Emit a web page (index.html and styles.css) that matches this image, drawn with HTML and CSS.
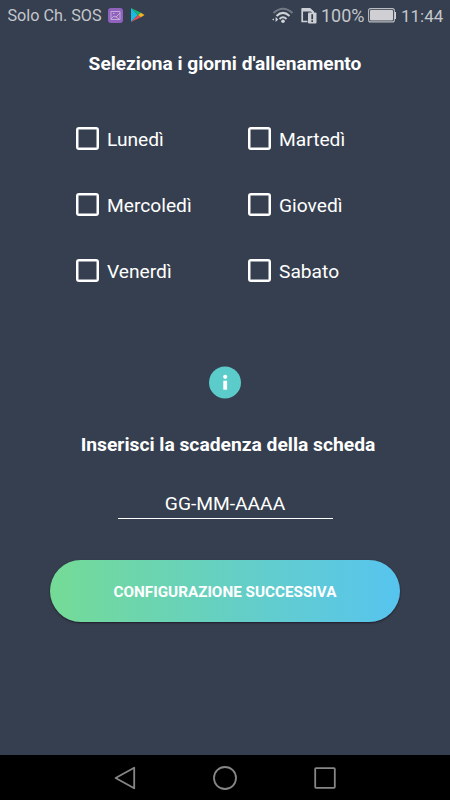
FILE: index.html
```html
<!DOCTYPE html>
<html lang="it">
<head>
<meta charset="utf-8">
<title>Giorni d'allenamento</title>
<link rel="stylesheet" href="styles.css">
</head>
<body>
<header class="status">
  <span class="carrier">Solo Ch. SOS</span>
  <svg class="gallery" width="15" height="15" viewBox="0 0 15 15"><rect width="15" height="15" rx="3" fill="#8f62bd"/><g fill="none" stroke="#c9b3dc" stroke-width=".9"><path d="M3 3.5h9v8H3zM3 11l3-3 2 1 4-4M8 9l3 2"/><path d="M5 5.5h1.5"/></g></svg>
  <svg class="play" width="15" height="16" viewBox="0 0 15 16"><path d="M1 1v14l7-7z" fill="#1cbadf"/><path d="M1 1l10 4.8L8 8z" fill="#10b875"/><path d="M1 15l10-4.8L8 8z" fill="#e84a50"/><path d="M11 5.8L14.5 8 11 10.2 8 8z" fill="#edb51f"/></svg>
  <svg class="wifi" width="22" height="17" viewBox="0 0 22 17"><g fill="none" stroke-width="2"><path d="M1.5 6Q11-2.5 20.5 6" stroke="#727985"/><path d="M4.5 8.9Q11 2.8 17.5 8.9M7.5 12Q11 8.6 14.5 12" stroke="#d0d2d6"/></g><circle cx="11" cy="14.3" r="1.8" fill="#d0d2d6"/><path d="M3.6 10v5l2.6-2.5zM2 11.5v2L0 12.5z" fill="#d0d2d6"/></svg>
  <svg class="sim" width="16" height="17" viewBox="0 0 16 17"><path d="M6.5 14.5H1.2V2H8.6L12 5v1" fill="none" stroke="#cdd0d4" stroke-width="1.7"/><path d="M1 1h8l3.8 3.5V6H11V4.5H1z" fill="#cdd0d4"/><rect x="7" y="5.5" width="8.5" height="11" rx="1" fill="#cdd0d4"/><path d="M11.2 7.2v5M11.2 13.3v1.7" stroke="#353e4e" stroke-width="1.7"/></svg>
  <span class="percent">100%</span>
  <svg class="battery" width="29" height="15" viewBox="0 0 29 15"><rect x=".6" y=".6" width="25.8" height="13.3" rx="2" fill="none" stroke="#b9bcc1" stroke-width="1.1"/><rect x="2" y="2" width="23" height="10.5" rx="1" fill="#d0d0d4"/><path d="M26.5 4H28v7h-1.5z" fill="#d0d0d4"/></svg>
  <span class="clock">11:44</span>
</header>
<main class="screen">
  <h1 class="heading">Seleziona i giorni d'allenamento</h1>
  <div class="days">
    <label class="day"><input class="box" type="checkbox"><span>Lunedì</span></label>
    <label class="day"><input class="box" type="checkbox"><span>Martedì</span></label>
    <label class="day"><input class="box" type="checkbox"><span>Mercoledì</span></label>
    <label class="day"><input class="box" type="checkbox"><span>Giovedì</span></label>
    <label class="day"><input class="box" type="checkbox"><span>Venerdì</span></label>
    <label class="day"><input class="box" type="checkbox"><span>Sabato</span></label>
  </div>
  <svg class="info" width="32" height="33" viewBox="0 0 32 33"><circle cx="16" cy="16.5" r="16" fill="#5ccccb"/><circle cx="16.2" cy="10.8" r="2.1" fill="#fff"/><path d="M14.3 14.7h3.8v9h-3.8z" fill="#fff"/></svg>
  <h2 class="heading expiry">Inserisci la scadenza della scheda</h2>
  <div class="date">GG-MM-AAAA</div>
  <button class="next" type="button">CONFIGURAZIONE SUCCESSIVA</button>
</main>
<nav class="nav">
  <svg width="24" height="24" viewBox="0 0 24 24"><path d="M2.6 12L21.2 1.7v20.6z"/></svg>
  <svg width="24" height="24" viewBox="0 0 24 24"><circle cx="12" cy="12" r="11"/></svg>
  <svg width="24" height="24" viewBox="0 0 24 24"><rect x="2.2" y="2.2" width="19.6" height="19.6" rx=".8"/></svg>
</nav>
</body>
</html>
```
FILE: styles.css
```css
* { box-sizing: border-box; }
body {
  margin: 0;
  height: 800px;
  display: flex;
  flex-direction: column;
  overflow: hidden;
  background: #363f4f;
  color: #fff;
  font-family: Roboto, "Liberation Sans", sans-serif;
}
.status {
  height: 32px;
  flex: none;
  display: flex;
  align-items: center;
  padding: 0 8px 0 7.5px;
  color: #c4c7cc;
  font-size: 17px;
  line-height: 32px;
  white-space: nowrap;
}
.status svg { flex: none; }
.carrier { width: 94px; font-size: 16.2px; }
.gallery { margin-left: 6.5px; margin-bottom: 1px; }
.play { margin-left: 7px; margin-bottom: 2px; }
.wifi { margin-left: auto; margin-bottom: 1px; }
.sim { margin-left: 7px; margin-bottom: 1px; }
.percent { width: 43px; margin-left: 4px; font-size: 18px; }
.battery { margin-left: 4px; margin-bottom: 1px; }
.clock { width: 41px; margin-left: 4px; font-size: 17px; }
.screen {
  flex: 1;
  display: flex;
  flex-direction: column;
  align-items: center;
}
.heading {
  margin: 20px 0 0;
  font-size: 19.15px;
  font-weight: 700;
  line-height: 24px;
  white-space: nowrap;
}
.days {
  width: 298px;
  margin-top: 29px;
  display: grid;
  grid-template-columns: 172px 126px;
  grid-auto-rows: 66.3px;
}
.day {
  display: flex;
  align-items: center;
  gap: 8px;
  font-size: 19.2px;
  line-height: 24px;
}
.day span { padding-top: 3.5px; }
.box {
  appearance: none;
  flex: none;
  width: 23px;
  height: 23px;
  margin: 0;
  border: 2px solid #fff;
  border-radius: 3px;
  box-shadow: inset 0 0 0 .5px #fff;
}
.info { margin-top: 62px; }
.expiry { margin: 34px 0 0; padding-left: 6px; font-size: 19.25px; }
.date {
  width: 215px;
  height: 27px;
  margin-top: 35px;
  border-bottom: 1px solid #fff;
  font-size: 19.2px;
  line-height: 24px;
  text-align: center;
}
.next {
  width: 350px;
  height: 62px;
  margin-top: 41px;
  padding: 2px 0 0;
  border: 0;
  border-radius: 31px;
  background: linear-gradient(90deg, #74db96, #57c4ef);
  box-shadow: 0 1px 2px #211b2c;
  color: #fff;
  font: 700 15.25px Roboto, "Liberation Sans", sans-serif;
}
.nav {
  height: 45px;
  flex: none;
  display: flex;
  align-items: center;
  justify-content: center;
  gap: 76px;
  background: #000;
}
.nav svg {
  fill: none;
  stroke: #868686;
  stroke-width: 1.8;
  stroke-linejoin: round;
}
```
